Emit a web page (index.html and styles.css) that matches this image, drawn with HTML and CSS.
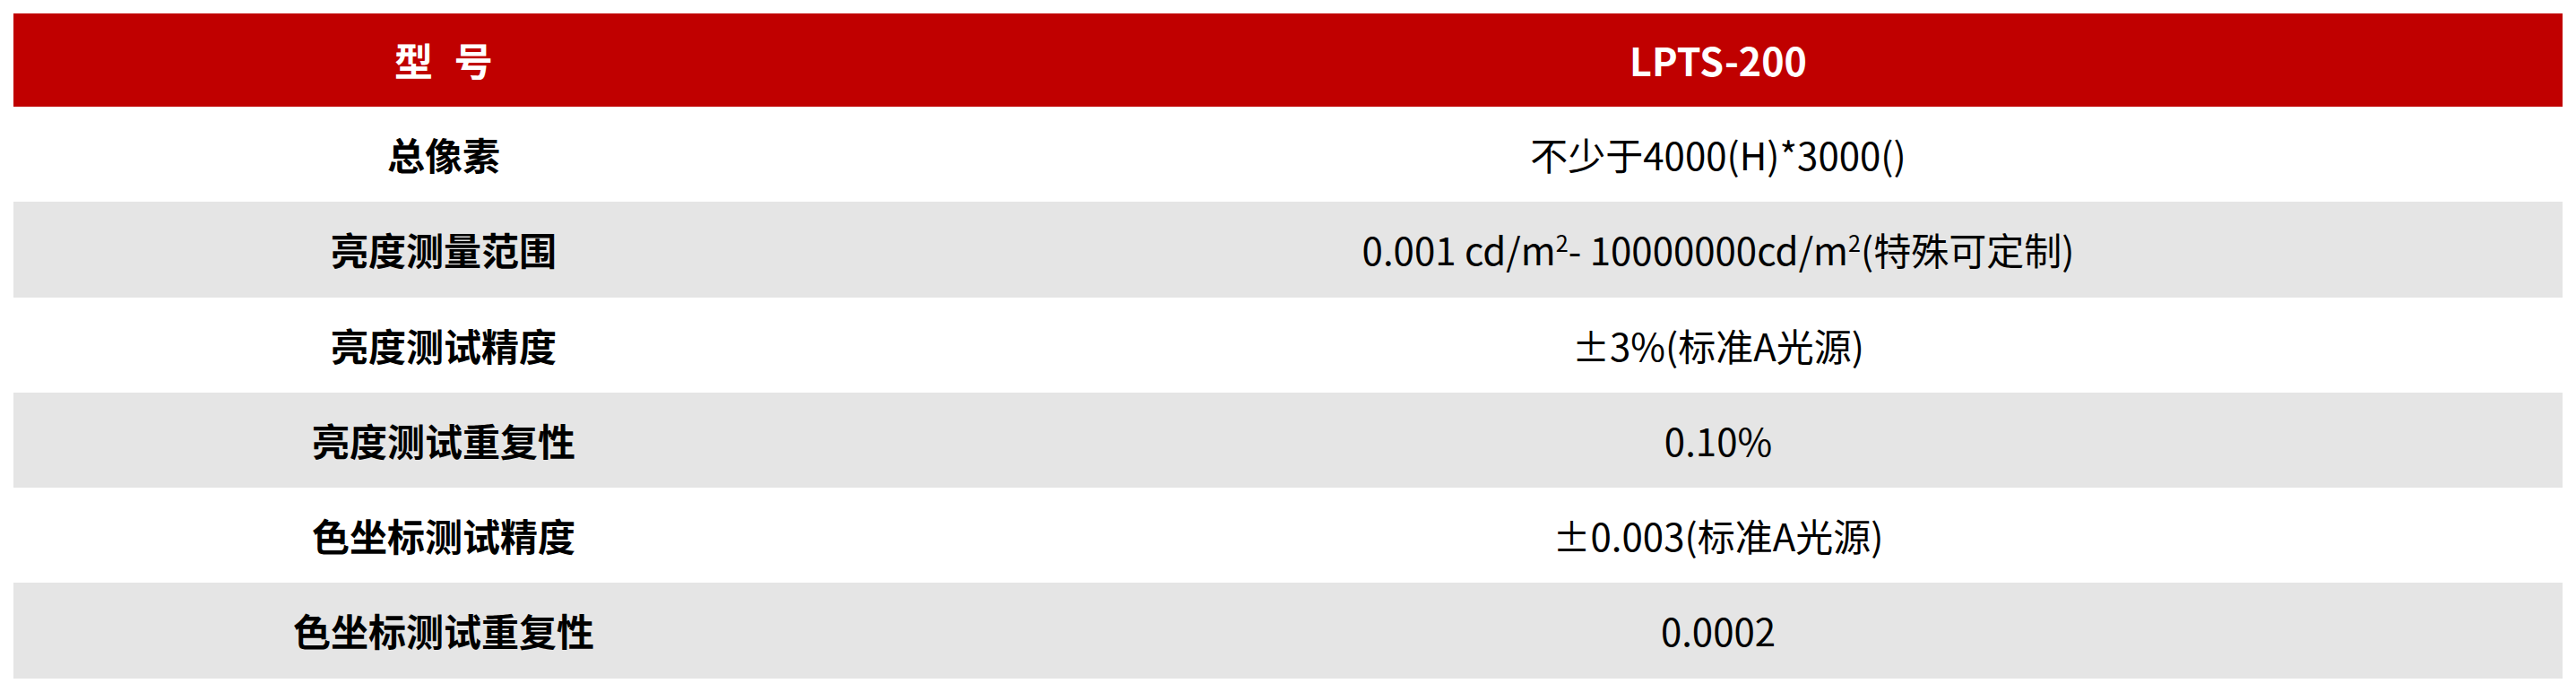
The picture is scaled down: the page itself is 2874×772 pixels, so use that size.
FILE: index.html
```html
<!DOCTYPE html>
<html lang="zh-CN">
<head>
<meta charset="utf-8">
<title>LPTS-200</title>
<link rel="stylesheet" href="styles.css">
</head>
<body>
<div class="spec">
  <div class="row head">
    <div class="cell label">型&nbsp;号</div>
    <div class="cell value">LPTS-200</div>
  </div>
  <div class="row">
    <div class="cell label">总像素</div>
    <div class="cell value">不少于4000(H)*3000()</div>
  </div>
  <div class="row alt">
    <div class="cell label">亮度测量范围</div>
    <div class="cell value"><span>0.001 cd/m<sup>2</sup>- 10000000cd/m<sup>2</sup>(特殊可定制)</span></div>
  </div>
  <div class="row">
    <div class="cell label">亮度测试精度</div>
    <div class="cell value">±3%(标准A光源)</div>
  </div>
  <div class="row alt">
    <div class="cell label">亮度测试重复性</div>
    <div class="cell value">0.10%</div>
  </div>
  <div class="row">
    <div class="cell label">色坐标测试精度</div>
    <div class="cell value">±0.003(标准A光源)</div>
  </div>
  <div class="row alt">
    <div class="cell label">色坐标测试重复性</div>
    <div class="cell value">0.0002</div>
  </div>
</div>
</body>
</html>
```
FILE: styles.css
```css
html, body {
  margin: 0;
  padding: 0;
  background: #ffffff;
}
body {
  padding: 15px;
  font-family: "Noto Sans CJK SC", "Noto Sans", sans-serif;
  color: #000000;
}
.spec {
  display: flex;
  flex-direction: column;
}
.row {
  display: grid;
  grid-template-columns: 960px 1fr;
  height: 106.3px;
  background: #ffffff;
}
.row.alt {
  background: #e5e5e5;
}
.row.head {
  height: 104px;
  background: #c00000;
  color: #ffffff;
}
.cell {
  display: flex;
  align-items: center;
  justify-content: center;
  font-size: 42px;
  line-height: 1.2;
  white-space: nowrap;
}
.label {
  font-weight: 700;
}
.value {
  font-weight: 400;
}
.head .cell {
  font-size: 43px;
}
.head .value {
  font-weight: 700;
}
.head .label {
  word-spacing: 14px;
}
sup {
  font-size: 0.6em;
  line-height: 0;
  vertical-align: super;
}
```
